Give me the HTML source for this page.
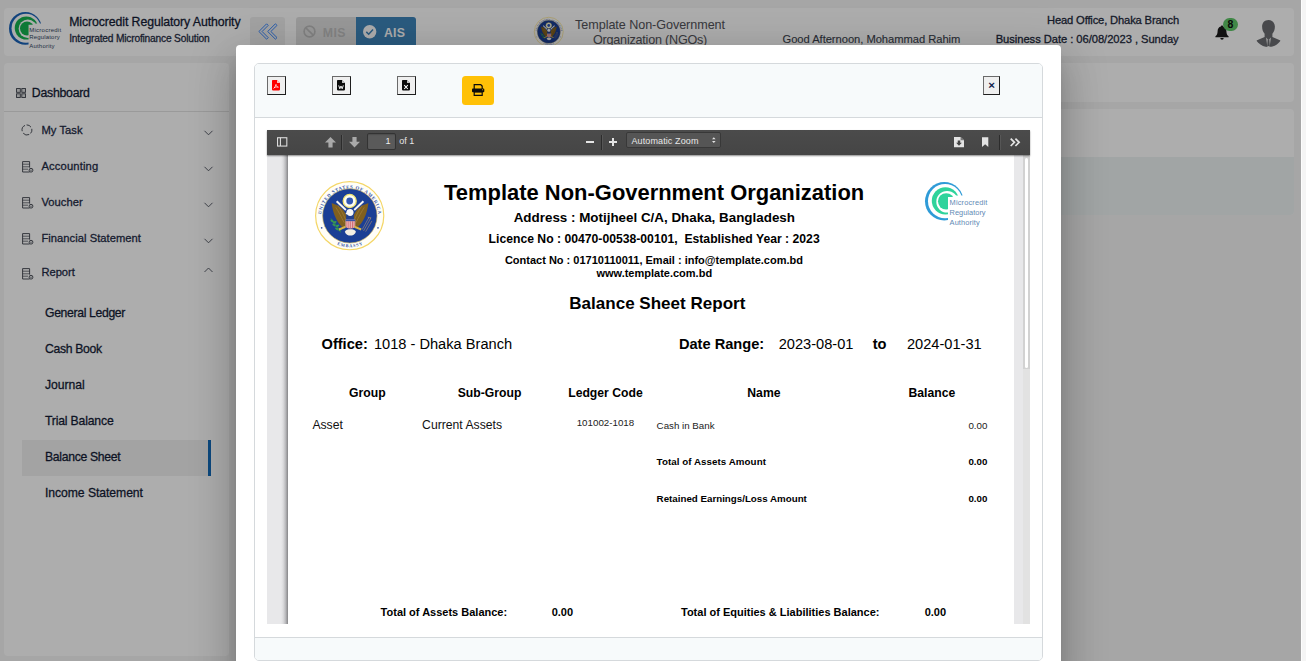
<!DOCTYPE html>
<html lang="en"><head><meta charset="utf-8"><title>Balance Sheet Report</title>
<style>
html,body{margin:0;padding:0;}
body{width:1306px;height:661px;overflow:hidden;position:relative;background:#f5f5f5;font-family:'Liberation Sans', sans-serif;}
.abs,.t{position:absolute;}
.t{white-space:pre;line-height:1;display:block;}
.t{line-height:1em;}
.card{position:absolute;background:#fff;border-radius:4px;}
svg{position:absolute;overflow:visible;}

#modal{left:0;top:0;width:0;height:0;}
.dlg{position:absolute;left:236px;top:45px;width:825px;height:640px;background:#fff;border-radius:4px;
 box-shadow:0 11px 15px -7px rgba(0,0,0,.2),0 24px 38px 3px rgba(0,0,0,.14),0 9px 46px 8px rgba(0,0,0,.12);}
.mcard{position:absolute;left:254px;top:63px;width:789px;height:598px;box-sizing:border-box;border:1px solid #d5d9dc;border-radius:5px;background:#fff;overflow:hidden;}
.btn{position:absolute;box-sizing:border-box;background:#efefef;border:1px solid;border-color:#6a6a6a #1e1e1e #1e1e1e #6a6a6a;}

</style></head><body>
<div id="page" class="abs" style="left:0;top:0;width:1301px;height:661px;overflow:hidden;">
<div class="card" style="left:4px;top:8px;width:1290px;height:48px;"></div>
<div class="card" style="left:4px;top:63px;width:225px;height:593px;"></div>
<div class="card" style="left:236px;top:63px;width:1058px;height:38.5px;"></div>
<div class="card" style="left:236px;top:109px;width:1058px;height:106px;"><div class="abs" style="left:0px;top:47.5px;width:1058px;height:58.5px;background:#eef3f4;border-radius:0 0 4px 4px;"></div></div>
<svg style="left:8.9px;top:11.7px;" width="65.4" height="40.9" viewBox="0 0 796 497"><defs><clipPath id="lhc"><path d="M-10 -10H800V140H238V520H-10Z"/></clipPath><clipPath id="lhd"><path d="M-10 -10H800V155H238V520H-10Z"/></clipPath><mask id="lhm1"><rect x="-10" y="-10" width="820" height="540" fill="#fff"/><circle cx="208" cy="198" r="177" fill="#000"/></mask><mask id="lhm2"><rect x="-10" y="-10" width="820" height="540" fill="#fff"/><circle cx="229" cy="204" r="112" fill="#000"/></mask></defs><g clip-path="url(#lhc)"><circle cx="199" cy="199" r="199" fill="#1a63b8" mask="url(#lhm1)"/><circle cx="211" cy="194" r="141" fill="#16b34f" mask="url(#lhm2)"/></g><circle cx="219" cy="200" r="85" fill="#16b34f" clip-path="url(#lhd)"/></svg>
<div class="abs" style="left:250px;top:17px;width:35px;height:34px;background:#efefef;border-radius:3px;"></div>
<svg style="left:257.5px;top:23px" width="20" height="17" viewBox="0 0 20 17" fill="none" stroke="#3a88ff" stroke-width="1.0" stroke-linejoin="round"><path d="M8.6 0.8L10.2 2.4L4.1 8.5L10.2 14.6L8.6 16.2L0.9 8.5Z"/><path d="M17.4 0.8L19 2.4L12.9 8.5L19 14.6L17.4 16.2L9.7 8.5Z"/></svg>
<div class="abs" style="left:296px;top:17px;width:60px;height:34px;background:#e1e1e1;border-radius:3px 0 0 3px;"></div>
<div class="abs" style="left:355.7px;top:17px;width:60px;height:34px;background:#3e86bc;border-radius:0 3px 3px 0;"></div>
<svg style="left:302.5px;top:25px" width="13" height="13" viewBox="0 0 13 13" fill="none" stroke="#bfbfbf" stroke-width="1.7"><circle cx="6.5" cy="6.5" r="5.4"/><path d="M2.8 2.8L10.2 10.2"/></svg>
<svg style="left:363.4px;top:25px" width="13.4" height="13.4" viewBox="0 0 13.4 13.4"><circle cx="6.7" cy="6.7" r="6.7" fill="#fff"/><path d="M3.3 6.9L5.7 9.2L10 4.6" fill="none" stroke="#3e86bc" stroke-width="1.5"/></svg>
<svg style="left:534.3px;top:17.2px;" width="29.5" height="29.5" viewBox="0 0 100 100"><defs><path id="hst" d="M8.9 52A41.2 41.2 0 0 1 91.3 52"/><path id="hsb" d="M4.6 50A45.5 45.5 0 0 0 95.6 50"/></defs><circle cx="50" cy="50" r="49.1" fill="#fffef8" stroke="#f4d666" stroke-width="1.7"/><circle cx="50.2" cy="50.2" r="39.2" fill="#1b3f95" stroke="#cdb05a" stroke-width="0.9"/><text font-family="'Liberation Serif',serif" font-weight="700" font-size="6.9" fill="#3553a6"><textPath href="#hst" startOffset="50%" text-anchor="middle" textLength="121" lengthAdjust="spacing">UNITED STATES OF AMERICA</textPath></text><text font-family="'Liberation Serif',serif" font-weight="700" font-size="6.2" fill="#3553a6"><textPath href="#hsb" startOffset="50%" text-anchor="middle" textLength="38" lengthAdjust="spacing">EMBASSY</textPath></text><circle cx="9.6" cy="67.5" r="1.25" fill="#3553a6"/><circle cx="90.8" cy="67.5" r="1.25" fill="#3553a6"/><path d="M24 32C29 33 37 37 41 42C43 45 45 48 45.5 51L45 63L41 68C36 64 31 57 28 49C26 43 24.6 37 24 32Z" fill="#80601f"/><path d="M77 32C72 33 64 37 60 42C58 45 56 48 55.5 51L56 63L60 68C65 64 70 57 73 49C75 43 76.4 37 77 32Z" fill="#80601f"/><path d="M30 38C34 44 38 52 42 60M33 35C37 41 41 48 44 55" stroke="#a07c35" stroke-width="1.1" fill="none"/><path d="M71 38C67 44 63 52 59 60M68 35C64 41 60 48 57 55" stroke="#a07c35" stroke-width="1.1" fill="none"/><path d="M30.2 30.2L32.2 28.2L45.4 40.6L43.6 42.8Z" fill="#f6f6f6"/><path d="M70.8 30.2L68.8 28.2L55.6 40.6L57.4 42.8Z" fill="#f6f6f6"/><circle cx="50" cy="28.8" r="9.4" fill="#fdfdf2" stroke="#efe36e" stroke-width="1.9"/><circle cx="50" cy="28.8" r="4.9" fill="#3158b4"/><path d="M45.2 45.4C45.2 42 47.6 40.4 50.6 40.4C53.6 40.4 55.6 42.4 55.6 45C55.6 48 54 50.4 50.4 50.4C48.6 50.4 47.2 49.6 46.4 48.4L44 47.4Z" fill="#f8f8f8"/><rect x="45" y="50.6" width="11" height="4.6" fill="#23418f"/><path d="M44 55.4H58V65.6C56 69.4 46 69.4 44 65.6Z" fill="#efc6c6"/><path d="M44 55.4H58V58H44Z" fill="#3a55a5"/><path d="M46 58v9.6M48.8 58v10.6M51.4 58v10.6M54 58v10.4M56.4 58v9.2" stroke="#cc5560" stroke-width="1.15" fill="none"/><path d="M23 54C26 57 29 61 32 66L37 74" stroke="#2f8a46" stroke-width="1.4" fill="none"/><g fill="#3a9a52"><ellipse cx="24.5" cy="57.5" rx="2.6" ry="1.4" transform="rotate(40 24.5 57.5)"/><ellipse cx="28.5" cy="59.5" rx="2.8" ry="1.4" transform="rotate(-20 28.5 59.5)"/><ellipse cx="27.5" cy="63.5" rx="2.8" ry="1.4" transform="rotate(35 27.5 63.5)"/><ellipse cx="32.5" cy="64.5" rx="2.8" ry="1.4" transform="rotate(-25 32.5 64.5)"/><ellipse cx="31.5" cy="69" rx="2.8" ry="1.4" transform="rotate(30 31.5 69)"/><ellipse cx="36" cy="70.5" rx="2.6" ry="1.3" transform="rotate(-20 36 70.5)"/></g><path d="M80 54L70 72M77.4 53L68 70M82 57.6L73 73" stroke="#8f7f78" stroke-width="1.05" fill="none"/><path d="M78 52l3.2 0.6l-1 3.2ZM75.6 51.4l3 0.4l-1 3Z" fill="#8f7f78"/><path d="M34 68.6L44 64.6L44.4 67.4L35 71.4ZM67 68.6L57 64.6L56.6 67.4L66 71.4Z" fill="#d9b548"/><path d="M43 73C44 70 48 69.4 51 69.4C54 69.4 58 70 59 73C58 77 54 78.6 51 78.6C48 78.6 44 77 43 73Z" fill="#f4efe4"/></svg>
<svg style="left:1215px;top:24.6px" width="14" height="15.4" viewBox="0 0 14 15.4"><path d="M7 0.4C7.7 0.4 8.1 0.9 8.1 1.5C10.3 2 11.4 3.9 11.4 6.2C11.4 9 12.3 10.2 13.6 11.3V12.2H0.4V11.3C1.7 10.2 2.6 9 2.6 6.2C2.6 3.9 3.7 2 5.9 1.5C5.9 0.9 6.3 0.4 7 0.4Z" fill="#1a1a1a"/><path d="M5.3 13H8.7A1.7 1.7 0 0 1 5.3 13Z" fill="#1a1a1a"/></svg>
<div class="abs" style="left:1223.2px;top:17.5px;width:14.6px;height:13.6px;background:#5fc768;border-radius:7px;"></div>
<span class="t" style="left:1227.4px;top:19.2px;font-size:10.5px;font-weight:700;color:#0c0c0c;">8</span>
<svg style="left:1254px;top:18px" width="29" height="29" viewBox="0 0 29 29"><defs><clipPath id="av"><circle cx="14.5" cy="14.5" r="14.5"/></clipPath></defs><g clip-path="url(#av)" fill="#6a6c70"><path d="M14.5 2C18.3 2 20.9 4.8 20.9 8.6C20.9 11.6 19.9 14.2 18.4 15.8V19L26.5 22.5V30H2.5V22.5L10.6 19V15.8C9.1 14.2 8.1 11.6 8.1 8.6C8.1 4.8 10.7 2 14.5 2Z"/><path d="M12 19.5L14.5 22L17 19.5L15.6 29H13.4Z" fill="#e9e9e9"/><path d="M13.8 21.5H15.2L15.8 28H13.2Z" fill="#6a6c70"/></g></svg>
<div class="abs" style="left:4px;top:111px;width:225px;height:1px;background:#e3e3e3;"></div>
<svg style="left:15.7px;top:87.8px" width="10.3" height="10.3" viewBox="0 0 11 11" fill="rgba(60,64,74,.18)" stroke="#3b3f4a" stroke-width="0.95"><rect x="0.6" y="0.6" width="4" height="4"/><rect x="6.2" y="0.6" width="4" height="4"/><rect x="0.6" y="6.2" width="4" height="4"/><rect x="6.2" y="6.2" width="4" height="4"/></svg>
<svg style="left:21.3px;top:124.3px" width="12" height="12" viewBox="0 0 12 12" fill="none" stroke="#3b3f4a" stroke-width="0.9"><path d="M1.2 7.2A5 5 0 0 1 4 1.4M5.6 0.9A5 5 0 0 1 10 3.2M10.8 4.8A5 5 0 0 1 9.6 9.4M8.2 10.5A5 5 0 0 1 2.2 9.2"/></svg>
<svg style="left:21.8px;top:160.6px" width="12" height="12" viewBox="0 0 12 12" fill="none" stroke="#3b3f4a" stroke-width="0.9"><path d="M7.6 11H0.6V0.6H7.6V6.6"/><path d="M0.6 3.2H7.6M0.6 5.8H7.6M0.6 8.2H6" stroke-width="0.7"/><circle cx="9" cy="9.2" r="1.9" fill="#fff"/><path d="M8.2 9.2H9.8" stroke-width="0.7"/></svg>
<svg style="left:21.8px;top:196.8px" width="12" height="12" viewBox="0 0 12 12" fill="none" stroke="#3b3f4a" stroke-width="0.9"><path d="M7.6 11H0.6V0.6H7.6V6.6"/><path d="M0.6 3.2H7.6M0.6 5.8H7.6M0.6 8.2H6" stroke-width="0.7"/><circle cx="9" cy="9.2" r="1.9" fill="#fff"/><path d="M8.2 9.2H9.8" stroke-width="0.7"/></svg>
<svg style="left:21.8px;top:233px" width="12" height="12" viewBox="0 0 12 12" fill="none" stroke="#3b3f4a" stroke-width="0.9"><path d="M7.6 11H0.6V0.6H7.6V6.6"/><path d="M0.6 3.2H7.6M0.6 5.8H7.6M0.6 8.2H6" stroke-width="0.7"/><circle cx="9" cy="9.2" r="1.9" fill="#fff"/><path d="M8.2 9.2H9.8" stroke-width="0.7"/></svg>
<svg style="left:21.8px;top:267.6px" width="12" height="12" viewBox="0 0 12 12" fill="none" stroke="#3b3f4a" stroke-width="0.9"><path d="M7.6 11H0.6V0.6H7.6V6.6"/><path d="M0.6 3.2H7.6M0.6 5.8H7.6M0.6 8.2H6" stroke-width="0.7"/><circle cx="9" cy="9.2" r="1.9" fill="#fff"/><path d="M8.2 9.2H9.8" stroke-width="0.7"/></svg>
<svg style="left:203.6px;top:130.0px" width="9" height="6" viewBox="0 0 9 6" fill="none" stroke="#4a4f5c" stroke-width="0.9"><path d="M0.5 0.8L4.5 4.8L8.5 0.8"/></svg>
<svg style="left:203.6px;top:166.2px" width="9" height="6" viewBox="0 0 9 6" fill="none" stroke="#4a4f5c" stroke-width="0.9"><path d="M0.5 0.8L4.5 4.8L8.5 0.8"/></svg>
<svg style="left:203.6px;top:202.2px" width="9" height="6" viewBox="0 0 9 6" fill="none" stroke="#4a4f5c" stroke-width="0.9"><path d="M0.5 0.8L4.5 4.8L8.5 0.8"/></svg>
<svg style="left:203.6px;top:238.4px" width="9" height="6" viewBox="0 0 9 6" fill="none" stroke="#4a4f5c" stroke-width="0.9"><path d="M0.5 0.8L4.5 4.8L8.5 0.8"/></svg>
<svg style="left:203.6px;top:267.4px" width="9" height="6" viewBox="0 0 9 6" fill="none" stroke="#4a4f5c" stroke-width="0.9"><path d="M0.5 5L4.5 1L8.5 5"/></svg>
<div class="abs" style="left:22px;top:440px;width:189px;height:35.7px;background:#f1f1f1;"></div>
<div class="abs" style="left:208px;top:440px;width:3px;height:35.7px;background:#146ab8;"></div>
<span class="t" style="left:29.20px;top:27.00px;font-size:6.0px;color:#33475f;letter-spacing:0.260px;">Microcredit</span>
<span class="t" style="left:29.20px;top:34.00px;font-size:6.0px;color:#33475f;letter-spacing:0.178px;">Regulatory</span>
<span class="t" style="left:29.20px;top:43.00px;font-size:6.0px;color:#33475f;letter-spacing:0.212px;">Authority</span>
<span class="t" style="left:69.20px;top:16.00px;font-size:12.3px;color:#141c36;letter-spacing:-0.093px;-webkit-text-stroke:0.28px;">Microcredit Regulatory Authority</span>
<span class="t" style="left:69.20px;top:34.00px;font-size:10.2px;color:#252d45;letter-spacing:-0.182px;-webkit-text-stroke:0.28px;">Integrated Microfinance Solution</span>
<span class="t" style="left:322.70px;top:27.00px;font-size:12.3px;color:#c2c2c2;font-weight:700;letter-spacing:0.475px;">MIS</span>
<span class="t" style="left:384.00px;top:27.00px;font-size:12.3px;color:#ffffff;font-weight:700;letter-spacing:0.233px;">AIS</span>
<span class="t" style="left:575.10px;top:19.00px;font-size:12.6px;color:#55555c;letter-spacing:-0.057px;-webkit-text-stroke:0.05px;">Template Non-Government</span>
<span class="t" style="left:593.00px;top:34.00px;font-size:12.6px;color:#55555c;letter-spacing:-0.220px;-webkit-text-stroke:0.05px;">Organization (NGOs)</span>
<span class="t" style="left:782.50px;top:34.00px;font-size:11.2px;color:#3a3f4d;letter-spacing:-0.043px;-webkit-text-stroke:0.1px;">Good Afternoon, Mohammad Rahim</span>
<span class="t" style="left:1047.00px;top:15.00px;font-size:11.2px;color:#232a3d;letter-spacing:-0.155px;-webkit-text-stroke:0.28px;">Head Office, Dhaka Branch</span>
<span class="t" style="left:995.70px;top:34.00px;font-size:11.2px;color:#232a3d;letter-spacing:-0.050px;-webkit-text-stroke:0.28px;">Business Date : 06/08/2023 , Sunday</span>
<span class="t" style="left:31.80px;top:87.00px;font-size:12.3px;color:#141c36;letter-spacing:-0.252px;-webkit-text-stroke:0.28px;">Dashboard</span>
<span class="t" style="left:41.40px;top:125.00px;font-size:11.2px;color:#232b46;letter-spacing:0.067px;-webkit-text-stroke:0.28px;">My Task</span>
<span class="t" style="left:41.40px;top:161.00px;font-size:11.2px;color:#232b46;letter-spacing:0.154px;-webkit-text-stroke:0.28px;">Accounting</span>
<span class="t" style="left:41.40px;top:197.00px;font-size:11.2px;color:#232b46;letter-spacing:0.034px;-webkit-text-stroke:0.28px;">Voucher</span>
<span class="t" style="left:41.40px;top:233.00px;font-size:11.2px;color:#232b46;letter-spacing:0.038px;-webkit-text-stroke:0.28px;">Financial Statement</span>
<span class="t" style="left:41.40px;top:267.00px;font-size:11.2px;color:#232b46;letter-spacing:-0.032px;-webkit-text-stroke:0.28px;">Report</span>
<span class="t" style="left:45.00px;top:307.00px;font-size:12.2px;color:#141c36;letter-spacing:-0.336px;-webkit-text-stroke:0.28px;">General Ledger</span>
<span class="t" style="left:45.00px;top:343.00px;font-size:12.2px;color:#141c36;letter-spacing:-0.325px;-webkit-text-stroke:0.28px;">Cash Book</span>
<span class="t" style="left:45.00px;top:379.00px;font-size:12.2px;color:#141c36;letter-spacing:-0.055px;-webkit-text-stroke:0.28px;">Journal</span>
<span class="t" style="left:45.00px;top:415.00px;font-size:12.2px;color:#141c36;letter-spacing:-0.168px;-webkit-text-stroke:0.28px;">Trial Balance</span>
<span class="t" style="left:45.00px;top:451.00px;font-size:12.2px;color:#141c36;letter-spacing:-0.306px;-webkit-text-stroke:0.28px;">Balance Sheet</span>
<span class="t" style="left:45.00px;top:487.00px;font-size:12.2px;color:#141c36;letter-spacing:-0.063px;-webkit-text-stroke:0.28px;">Income Statement</span>
</div>
<div id="overlay" class="abs" style="left:0;top:0;width:1301px;height:661px;background:rgba(0,0,0,.32);"></div>
<div class="abs" style="left:1301px;top:0;width:5px;height:661px;background:#f5f5f5;border-left:1px solid #fdfdfd;box-sizing:border-box;"></div>
<div id="modal" class="abs">
<div class="dlg"></div>
<div class="mcard"><div class="abs" style="left:0;top:0;width:787px;height:53px;background:#f7fafb;border-bottom:1px solid #d5d9dc;"></div><div class="abs" style="left:0;top:573px;width:787px;height:30px;background:#f7fafb;border-top:1px solid #d5d9dc;"></div></div>
<div class="btn" style="left:267px;top:76px;width:19px;height:19px;"></div>
<svg style="left:272.1px;top:80.1px" width="8" height="10.4" viewBox="0 0 8 10.4"><path d="M0.8 0H5L8 3V9.6A0.8 0.8 0 0 1 7.2 10.4H0.8A0.8 0.8 0 0 1 0 9.6V0.8A0.8 0.8 0 0 1 0.8 0Z" fill="#ff0000"/><path d="M5 0V3H8Z" fill="#fff" opacity=".75"/><path d="M1.6 8.6C2.8 7.6 3.6 6.2 4 4.4M2 7.6C3.4 7 5 6.8 6.4 7.2M4 4.4C4.2 6 5 7 6.4 7.2" stroke="#fff" stroke-width="0.7" fill="none"/></svg>
<div class="btn" style="left:332px;top:76px;width:19px;height:19px;"></div>
<svg style="left:337.1px;top:80.1px" width="8" height="10.4" viewBox="0 0 8 10.4"><path d="M0.8 0H5L8 3V9.6A0.8 0.8 0 0 1 7.2 10.4H0.8A0.8 0.8 0 0 1 0 9.6V0.8A0.8 0.8 0 0 1 0.8 0Z" fill="#0a0a0a"/><path d="M5 0V3H8Z" fill="#fff" opacity=".75"/><path d="M1.7 5.4L2.8 8.8L4 6L5.2 8.8L6.3 5.4" stroke="#fff" stroke-width="0.95" fill="none"/></svg>
<div class="btn" style="left:397px;top:76px;width:19px;height:19px;"></div>
<svg style="left:402.1px;top:80.1px" width="8" height="10.4" viewBox="0 0 8 10.4"><path d="M0.8 0H5L8 3V9.6A0.8 0.8 0 0 1 7.2 10.4H0.8A0.8 0.8 0 0 1 0 9.6V0.8A0.8 0.8 0 0 1 0.8 0Z" fill="#0a0a0a"/><path d="M5 0V3H8Z" fill="#fff" opacity=".75"/><path d="M2.2 5.2L5.8 9M5.8 5.2L2.2 9" stroke="#fff" stroke-width="1.05" fill="none"/></svg>
<div class="abs" style="left:462px;top:75.8px;width:32px;height:29.4px;background:#ffc107;border-radius:3.5px;"></div>
<svg style="left:472.4px;top:84.4px" width="12.3" height="11.9" viewBox="0 0 12.3 11.9"><path d="M1.6 0H9L10.8 1.8V5H9.6V2.4L8.5 1.2H2.8V5H1.6Z" fill="#0c0c0c"/><rect x="0" y="4.6" width="12.3" height="3.6" rx="0.9" fill="#0c0c0c"/><path d="M1.6 7.4H10.8V11.9H1.6ZM2.8 8.4V10.7H9.6V8.4Z" fill="#0c0c0c" fill-rule="evenodd"/><circle cx="10.6" cy="5.8" r="0.55" fill="#ffc107"/></svg>
<div class="btn" style="left:983px;top:76px;width:17px;height:19px;"></div>
<span class="t" style="left:988.3px;top:80.1px;font-size:11.5px;font-weight:700;color:#10204a;">×</span>
<div class="abs" style="left:267px;top:130px;width:763px;height:494px;background:#e8e8ea;"></div>
<div class="abs" style="left:280.5px;top:154px;width:7.5px;height:470px;background:linear-gradient(90deg,#e8e8ea 0%,#dcdcde 30%,#bdbdc0 62%,#97979a 88%,#858587 100%);"></div>
<div class="abs" style="left:287.9px;top:154px;width:726.2px;height:470px;background:#fff;"></div>
<div class="abs" style="left:1023.2px;top:154px;width:6.8px;height:470px;background:#e2e2e2;"></div>
<div class="abs" style="left:1023.2px;top:154px;width:6.8px;height:215px;background:#d2d2d2;"></div>
<div class="abs" style="left:1024.8px;top:158px;width:3.2px;height:209.7px;background:#fff;border-radius:1.6px;"></div>
<div class="abs" style="left:267px;top:130px;width:763px;height:24.6px;background:linear-gradient(#4b4b4b,#454545);box-shadow:0 1px 1.5px rgba(0,0,0,.45);"></div>
<svg style="left:277px;top:136.6px" width="10.4" height="9.8" viewBox="0 0 11 10" fill="none" stroke="#e4e4e4" stroke-width="1.1"><rect x="0.6" y="0.6" width="9.8" height="8.8"/><path d="M3.6 0.6V9.4"/></svg>
<svg style="left:324.5px;top:136.6px" width="11" height="10.4" viewBox="0 0 11 10.4"><path d="M5.5 0L11 5.6H7.6V10.4H3.4V5.6H0Z" fill="#a9a9a9"/></svg>
<div class="abs" style="left:341px;top:135px;width:1px;height:14.5px;background:#2c2c2c;box-shadow:1px 0 0 rgba(255,255,255,.08);"></div>
<svg style="left:348.5px;top:136.6px" width="11" height="10.4" viewBox="0 0 11 10.4"><path d="M5.5 10.4L11 4.8H7.6V0H3.4V4.8H0Z" fill="#a9a9a9"/></svg>
<div class="abs" style="left:367.2px;top:133.4px;width:29.1px;height:16.2px;box-sizing:border-box;background:#5a5a5a;border:1px solid #333;border-radius:2px;box-shadow:inset 0 1px 1px rgba(0,0,0,.15);"></div>
<div class="abs" style="left:585.5px;top:141px;width:8.5px;height:1.8px;background:#e4e4e4;"></div>
<div class="abs" style="left:601px;top:135px;width:1px;height:14.5px;background:#2c2c2c;box-shadow:1px 0 0 rgba(255,255,255,.08);"></div>
<div class="abs" style="left:608.5px;top:141px;width:8.5px;height:1.8px;background:#e4e4e4;"></div>
<div class="abs" style="left:611.9px;top:137.6px;width:1.8px;height:8.6px;background:#e4e4e4;"></div>
<div class="abs" style="left:626.2px;top:132.1px;width:94.6px;height:15.8px;box-sizing:border-box;background:#555;border:1px solid #383838;border-radius:2px;"></div>
<svg style="left:711.6px;top:137px" width="3.6" height="6.2" viewBox="0 0 4 6.6" fill="#e4e4e4"><path d="M2 0L4 2.4H0ZM2 6.6L4 4.2H0Z"/></svg>
<svg style="left:953.8px;top:136.8px" width="10" height="10.2" viewBox="0 0 10.4 10.6"><path d="M0 0H6.8L10.4 3.4V10.6H0Z" fill="#e4e4e4"/><path d="M6.8 0V3.4H10.4Z" fill="#777"/><path d="M3.9 3.6H6.5V6H8.2L5.2 9.2L2.2 6H3.9Z" fill="#444"/></svg>
<svg style="left:981.8px;top:136.8px" width="6.3" height="10.2" viewBox="0 0 6.8 10.4"><path d="M0 0H6.8V10.4L3.4 7.4L0 10.4Z" fill="#e4e4e4"/></svg>
<div class="abs" style="left:998.6px;top:135px;width:1px;height:14.5px;background:#2c2c2c;box-shadow:1px 0 0 rgba(255,255,255,.08);"></div>
<svg style="left:1009.6px;top:137.6px" width="10.4" height="8.6" viewBox="0 0 10.4 8.6" fill="none" stroke="#e4e4e4" stroke-width="1.75"><path d="M0.7 0.6L4.4 4.3L0.7 8M5.4 0.6L9.1 4.3L5.4 8"/></svg>
<svg style="left:314.6px;top:181px;" width="69.4" height="69.4" viewBox="0 0 100 100"><defs><path id="pst" d="M8.9 52A41.2 41.2 0 0 1 91.3 52"/><path id="psb" d="M4.6 50A45.5 45.5 0 0 0 95.6 50"/></defs><circle cx="50" cy="50" r="49.1" fill="#fffef8" stroke="#f4d666" stroke-width="1.7"/><circle cx="50.2" cy="50.2" r="39.2" fill="#1b3f95" stroke="#cdb05a" stroke-width="0.9"/><text font-family="'Liberation Serif',serif" font-weight="700" font-size="6.9" fill="#3553a6"><textPath href="#pst" startOffset="50%" text-anchor="middle" textLength="121" lengthAdjust="spacing">UNITED STATES OF AMERICA</textPath></text><text font-family="'Liberation Serif',serif" font-weight="700" font-size="6.2" fill="#3553a6"><textPath href="#psb" startOffset="50%" text-anchor="middle" textLength="38" lengthAdjust="spacing">EMBASSY</textPath></text><circle cx="9.6" cy="67.5" r="1.25" fill="#3553a6"/><circle cx="90.8" cy="67.5" r="1.25" fill="#3553a6"/><path d="M24 32C29 33 37 37 41 42C43 45 45 48 45.5 51L45 63L41 68C36 64 31 57 28 49C26 43 24.6 37 24 32Z" fill="#80601f"/><path d="M77 32C72 33 64 37 60 42C58 45 56 48 55.5 51L56 63L60 68C65 64 70 57 73 49C75 43 76.4 37 77 32Z" fill="#80601f"/><path d="M30 38C34 44 38 52 42 60M33 35C37 41 41 48 44 55" stroke="#a07c35" stroke-width="1.1" fill="none"/><path d="M71 38C67 44 63 52 59 60M68 35C64 41 60 48 57 55" stroke="#a07c35" stroke-width="1.1" fill="none"/><path d="M30.2 30.2L32.2 28.2L45.4 40.6L43.6 42.8Z" fill="#f6f6f6"/><path d="M70.8 30.2L68.8 28.2L55.6 40.6L57.4 42.8Z" fill="#f6f6f6"/><circle cx="50" cy="28.8" r="9.4" fill="#fdfdf2" stroke="#efe36e" stroke-width="1.9"/><circle cx="50" cy="28.8" r="4.9" fill="#3158b4"/><path d="M45.2 45.4C45.2 42 47.6 40.4 50.6 40.4C53.6 40.4 55.6 42.4 55.6 45C55.6 48 54 50.4 50.4 50.4C48.6 50.4 47.2 49.6 46.4 48.4L44 47.4Z" fill="#f8f8f8"/><rect x="45" y="50.6" width="11" height="4.6" fill="#23418f"/><path d="M44 55.4H58V65.6C56 69.4 46 69.4 44 65.6Z" fill="#efc6c6"/><path d="M44 55.4H58V58H44Z" fill="#3a55a5"/><path d="M46 58v9.6M48.8 58v10.6M51.4 58v10.6M54 58v10.4M56.4 58v9.2" stroke="#cc5560" stroke-width="1.15" fill="none"/><path d="M23 54C26 57 29 61 32 66L37 74" stroke="#2f8a46" stroke-width="1.4" fill="none"/><g fill="#3a9a52"><ellipse cx="24.5" cy="57.5" rx="2.6" ry="1.4" transform="rotate(40 24.5 57.5)"/><ellipse cx="28.5" cy="59.5" rx="2.8" ry="1.4" transform="rotate(-20 28.5 59.5)"/><ellipse cx="27.5" cy="63.5" rx="2.8" ry="1.4" transform="rotate(35 27.5 63.5)"/><ellipse cx="32.5" cy="64.5" rx="2.8" ry="1.4" transform="rotate(-25 32.5 64.5)"/><ellipse cx="31.5" cy="69" rx="2.8" ry="1.4" transform="rotate(30 31.5 69)"/><ellipse cx="36" cy="70.5" rx="2.6" ry="1.3" transform="rotate(-20 36 70.5)"/></g><path d="M80 54L70 72M77.4 53L68 70M82 57.6L73 73" stroke="#8f7f78" stroke-width="1.05" fill="none"/><path d="M78 52l3.2 0.6l-1 3.2ZM75.6 51.4l3 0.4l-1 3Z" fill="#8f7f78"/><path d="M34 68.6L44 64.6L44.4 67.4L35 71.4ZM67 68.6L57 64.6L56.6 67.4L66 71.4Z" fill="#d9b548"/><path d="M43 73C44 70 48 69.4 51 69.4C54 69.4 58 70 59 73C58 77 54 78.6 51 78.6C48 78.6 44 77 43 73Z" fill="#f4efe4"/></svg>
<svg style="left:924.9px;top:181.9px;" width="77.0" height="48.1" viewBox="0 0 796 497"><defs><clipPath id="lpc"><path d="M-10 -10H800V140H238V520H-10Z"/></clipPath><clipPath id="lpd"><path d="M-10 -10H800V155H238V520H-10Z"/></clipPath><mask id="lpm1"><rect x="-10" y="-10" width="820" height="540" fill="#fff"/><circle cx="208" cy="198" r="177" fill="#000"/></mask><mask id="lpm2"><rect x="-10" y="-10" width="820" height="540" fill="#fff"/><circle cx="229" cy="204" r="112" fill="#000"/></mask></defs><g clip-path="url(#lpc)"><circle cx="199" cy="199" r="199" fill="#2f9bd7" mask="url(#lpm1)"/><circle cx="211" cy="194" r="141" fill="#2fd39b" mask="url(#lpm2)"/></g><circle cx="219" cy="200" r="85" fill="#2fd39b" clip-path="url(#lpd)"/></svg>
<span class="t" style="left:949.60px;top:199.00px;font-size:7.4px;color:#5f8ab5;letter-spacing:0.169px;">Microcredit</span>
<span class="t" style="left:949.60px;top:209.00px;font-size:7.4px;color:#5f8ab5;letter-spacing:0.025px;">Regulatory</span>
<span class="t" style="left:949.60px;top:219.00px;font-size:7.4px;color:#5f8ab5;letter-spacing:0.114px;">Authority</span>
<span class="t" style="left:444.10px;top:182.00px;font-size:21.95px;color:#000;font-weight:700;">Template Non-Government Organization</span>
<span class="t" style="left:513.70px;top:211.00px;font-size:13.4px;color:#000;font-weight:700;">Address : Motijheel C/A, Dhaka, Bangladesh</span>
<span class="t" style="left:488.60px;top:233.00px;font-size:12.2px;color:#000;font-weight:700;">Licence No : 00470-00538-00101,  Established Year : 2023</span>
<span class="t" style="left:504.90px;top:255.00px;font-size:11.0px;color:#000;font-weight:700;">Contact No : 01710110011, Email : info@template.com.bd</span>
<span class="t" style="left:596.40px;top:268.00px;font-size:11.0px;color:#000;font-weight:700;">www.template.com.bd</span>
<span class="t" style="left:569.30px;top:295.00px;font-size:17.05px;color:#000;font-weight:700;">Balance Sheet Report</span>
<span class="t" style="left:321.50px;top:337.00px;font-size:14.64px;color:#000;font-weight:700;">Office:</span>
<span class="t" style="left:373.90px;top:337.00px;font-size:14.64px;color:#000;">1018 - Dhaka Branch</span>
<span class="t" style="left:678.90px;top:337.00px;font-size:14.64px;color:#000;font-weight:700;">Date Range:</span>
<span class="t" style="left:778.70px;top:337.00px;font-size:14.64px;color:#000;">2023-08-01</span>
<span class="t" style="left:872.70px;top:337.00px;font-size:14.64px;color:#000;font-weight:700;">to</span>
<span class="t" style="left:906.90px;top:337.00px;font-size:14.64px;color:#000;">2024-01-31</span>
<span class="t" style="left:349.10px;top:387.00px;font-size:12.2px;color:#000;font-weight:700;">Group</span>
<span class="t" style="left:457.70px;top:387.00px;font-size:12.2px;color:#000;font-weight:700;">Sub-Group</span>
<span class="t" style="left:568.20px;top:387.00px;font-size:12.2px;color:#000;font-weight:700;">Ledger Code</span>
<span class="t" style="left:747.30px;top:387.00px;font-size:12.2px;color:#000;font-weight:700;">Name</span>
<span class="t" style="left:908.50px;top:387.00px;font-size:12.2px;color:#000;font-weight:700;">Balance</span>
<span class="t" style="left:312.40px;top:419.00px;font-size:12.2px;color:#111;">Asset</span>
<span class="t" style="left:422.10px;top:419.00px;font-size:12.2px;color:#111;">Current Assets</span>
<span class="t" style="left:576.70px;top:418.00px;font-size:9.76px;color:#222;">101002-1018</span>
<span class="t" style="left:656.60px;top:421.00px;font-size:9.76px;color:#1c1c1c;">Cash in Bank</span>
<span class="t" style="left:968.40px;top:421.00px;font-size:9.76px;color:#1c1c1c;">0.00</span>
<span class="t" style="left:656.60px;top:457.00px;font-size:9.76px;color:#000;font-weight:700;letter-spacing:0.064px;">Total of Assets Amount</span>
<span class="t" style="left:968.40px;top:457.00px;font-size:9.76px;color:#000;font-weight:700;">0.00</span>
<span class="t" style="left:656.60px;top:494.00px;font-size:9.76px;color:#000;font-weight:700;">Retained Earnings/Loss Amount</span>
<span class="t" style="left:968.40px;top:494.00px;font-size:9.76px;color:#000;font-weight:700;">0.00</span>
<span class="t" style="left:380.60px;top:607.00px;font-size:11.0px;color:#000;font-weight:700;">Total of Assets Balance:</span>
<span class="t" style="left:551.70px;top:607.00px;font-size:11.0px;color:#000;font-weight:700;">0.00</span>
<span class="t" style="left:681.00px;top:607.00px;font-size:11.0px;color:#000;font-weight:700;">Total of Equities &amp; Liabilities Balance:</span>
<span class="t" style="left:924.70px;top:607.00px;font-size:11.0px;color:#000;font-weight:700;">0.00</span>
<span class="t" style="left:399.30px;top:137.00px;font-size:9.0px;color:#e6e6e6;">of 1</span>
<span class="t" style="left:385.50px;top:137.00px;font-size:9.0px;color:#f0f0f0;">1</span>
<span class="t" style="left:631.50px;top:137.00px;font-size:9.0px;color:#e8e8e8;letter-spacing:0.105px;">Automatic Zoom</span>
</div>
</body></html>
